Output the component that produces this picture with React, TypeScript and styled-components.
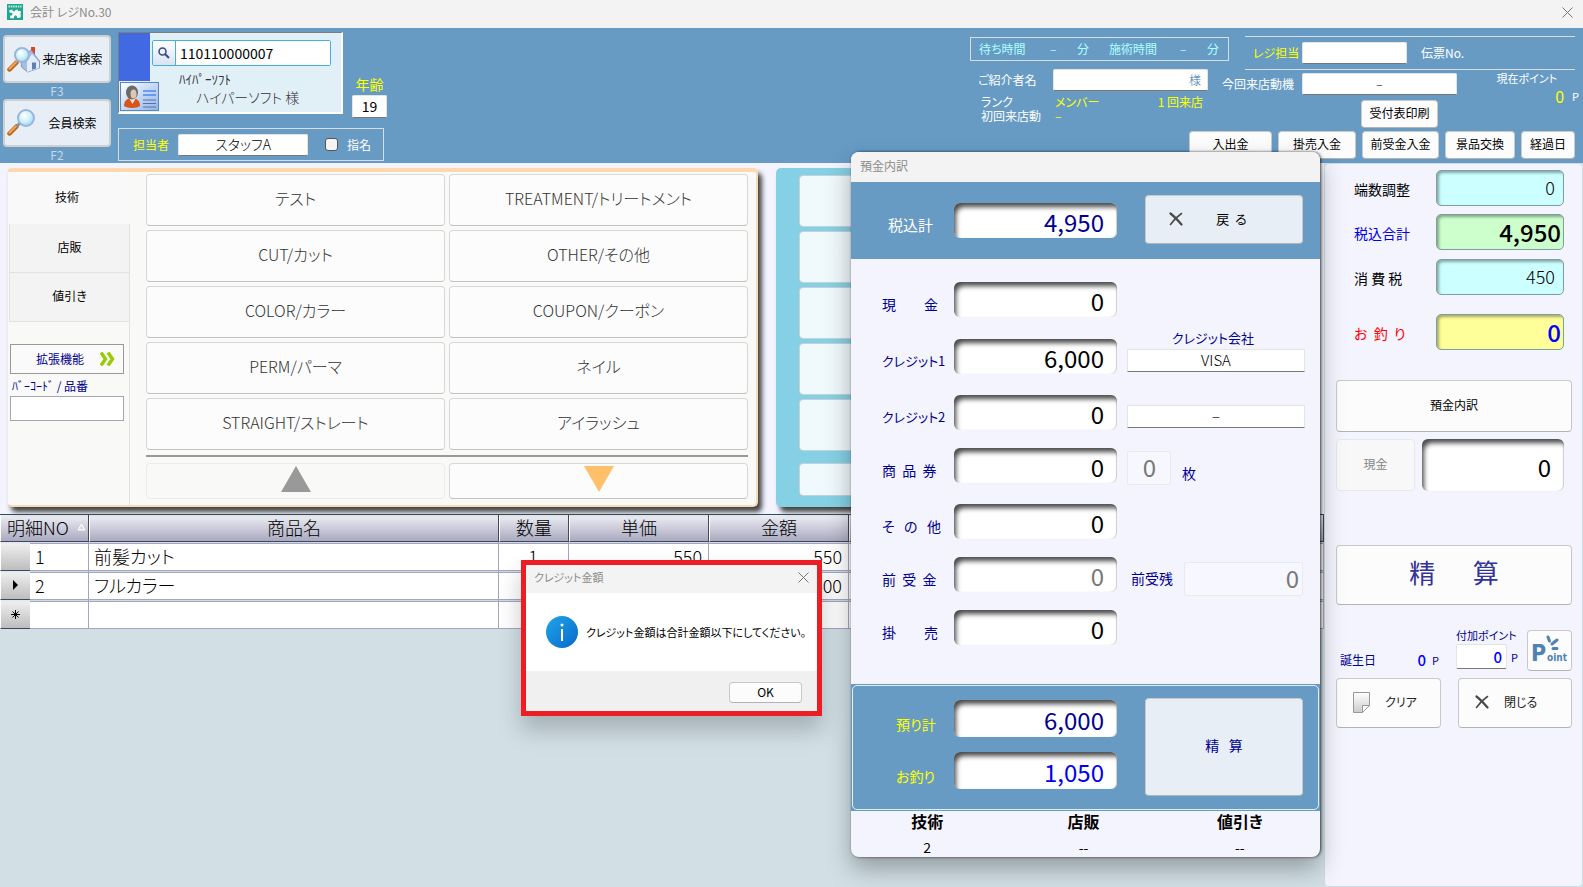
import React from 'react';
import styled, { createGlobalStyle, css } from 'styled-components';

const BLUE = '#679bc4';
const PALE = '#f4f4ff';
const NAVY = '#000090';

const GlobalStyle = createGlobalStyle`
  *, *::before, *::after { box-sizing: border-box; }
  body { margin: 0; }
  body, button, input, select {
    font-family: "Noto Sans CJK JP", "Liberation Sans", sans-serif;
    font-feature-settings: "palt";
    font-weight: 300;
    font-size: 12px;
    line-height: 16px;
    color: #000;
  }
  input, select { min-width: 0; }
`;

/* ---------- shared controls ---------- */

const Page = styled.div`
  position: relative;
  display: flex;
  flex-direction: column;
  min-height: 100vh;
  overflow: hidden;
  background: #d2e0e6;
`;

const Button = styled.button<{ $tone?: 'white' | 'pale' }>`
  display: flex;
  align-items: center;
  justify-content: center;
  padding: 0 0 2px;
  border: 1px solid #c9c9c9;
  border-bottom-color: #b4b4b4;
  border-radius: 4px;
  background: ${(p) => (p.$tone === 'pale' ? '#e8eef6' : '#fcfcfc')};
  white-space: pre;
  font-weight: 400;
  &:disabled { color: #858585; background: #f8f8f9; border-color: #e8e8ea; }
`;

const Box = styled.input<{ $w: number; $align?: string }>`
  width: ${(p) => p.$w}px;
  height: 22px;
  padding: 0 6px 1px;
  border: 1px solid #e4e4e4;
  border-bottom-color: #777;
  border-radius: 2px;
  background: #fff;
  text-align: ${(p) => p.$align || 'left'};
`;

const Amount = styled.input<{ $color?: string; $h?: number }>`
  width: 100%;
  height: ${(p) => p.$h || 35}px;
  padding: 2px 13px 0 8px;
  border: 0;
  border-radius: 6px;
  background: #fff;
  box-shadow: inset 4px 6px 5px -2px #4a4a4a, inset -1px 0 1px #ccc;
  text-align: right;
  font-size: 24px;
  line-height: 28px;
  font-weight: 400;
  color: ${(p) => p.$color || '#000'};
  &:disabled { color: #777; }
`;

/* ---------- title bar ---------- */

const TitleBar = styled.header`
  display: flex;
  align-items: center;
  gap: 7px;
  height: 28px;
  padding: 0 10px 4px 7px;
  background: #f3f3f3;
  color: #8c8c8c;
  font-weight: 400;
`;

const Title = styled.h1`
  flex: 1;
  margin: 0;
  font-size: 12px;
  font-weight: 400;
`;

const PlainButton = styled.button`
  display: flex;
  padding: 0;
  border: 0;
  background: none;
`;

/* ---------- header ---------- */

const Header = styled.section`
  display: flex;
  justify-content: space-between;
  height: 135px;
  background: ${BLUE};
  color: #fff;
  font-weight: 400;
  white-space: nowrap;
`;

const HeaderLeft = styled.div`
  display: flex;
  padding-left: 3px;
`;

const SearchColumn = styled.div`
  display: flex;
  flex-direction: column;
  width: 108px;
  margin-right: 7px;
  padding-top: 7px;
`;

const SearchButton = styled(Button)`
  height: 48px;
  justify-content: space-between;
  padding: 0 4px 1px 2px;
  border-width: 2px;
  border-color: #cfcfcf;
`;

const SearchText = styled.span`
  flex: 1;
  text-align: center;
`;

const KeyHint = styled.span`
  height: 16px;
  text-align: center;
  color: #c6d9ea;
`;

const CustomerColumn = styled.div`
  display: flex;
  flex-direction: column;
  gap: 14px;
  padding-top: 4px;
`;

const CustomerRow = styled.div`
  display: flex;
  align-items: flex-end;
  gap: 9px;
`;

const CustomerCard = styled.div`
  display: flex;
  width: 225px;
  height: 82px;
  border: 1px solid #7d7d7d;
  border-right: 2px solid #fff;
  border-bottom: 2px solid #fff;
  background: #e1eff7;
  color: #333;
`;

const Photo = styled.div`
  width: 31px;
  height: 48px;
  margin-right: 2px;
  background: #4169e1;
`;

const CardIcon = styled.span`
  display: block;
  width: 39px;
  height: 29px;
  margin-top: 49px;
  margin-left: -32px;
  margin-right: -7px;
`;

const CardFields = styled.div`
  display: flex;
  flex-direction: column;
  padding-top: 7px;
`;

const CodeSearch = styled.div`
  display: flex;
  width: 179px;
  height: 26px;
  border: 1px solid #45b0df;
  border-radius: 2px;
  background: #fff;
`;

const CodeButton = styled(PlainButton)`
  width: 23px;
  align-items: center;
  justify-content: center;
  border-right: 1px solid #45b0df;
  background: linear-gradient(#fff, #dbe3f2);
`;

const CodeInput = styled.input`
  flex: 1;
  border: 0;
  padding: 0 4px;
  background: #fff;
  font-size: 14px;
  font-weight: 400;
`;

const Kana = styled.span`
  padding: 5px 0 0 27px;
  font-size: 13px;
  font-feature-settings: normal;
`;

const FullName = styled.span`
  padding-left: 44px;
  font-size: 14px;
  font-weight: 300;
  line-height: 20px;
`;

const Age = styled.label`
  display: flex;
  flex-direction: column;
  align-items: center;
  gap: 3px;
  margin-bottom: -4px;
  color: #ff0;
  font-size: 14px;
`;

const AgeBox = styled(Box)`
  height: 23px;
  font-size: 14px;
  font-weight: 400;
`;

const StaffBox = styled.div`
  display: flex;
  align-items: center;
  width: 266px;
  height: 33px;
  padding-left: 14px;
  border: 1px solid #d5dde5;
`;

const Yellow = styled.span`
  color: #ff0;
`;

const StaffLabel = styled.label`
  width: 45px;
  color: #ff0;
`;

const StaffInput = styled(Box)`
  margin-right: 17px;
  font-size: 14px;
`;

const CheckLabel = styled.label`
  display: flex;
  align-items: center;
  gap: 9px;
`;

const Check = styled.input`
  appearance: none;
  width: 13px;
  height: 13px;
  margin: 0;
  border: 1px solid #555;
  border-radius: 3px;
  background: #f4f4f4;
`;

const HeaderRight = styled.div`
  display: flex;
  flex-direction: column;
  padding: 8px 8px 0 0;
`;

const InfoRow = styled.div`
  display: flex;
  height: 95px;
`;

const VisitInfo = styled.div`
  display: flex;
  flex-direction: column;
  width: 252px;
  padding-top: 1px;
`;

const WaitBox = styled.div`
  display: grid;
  grid-template-columns: 71px 27px 32px 71px 27px 1fr;
  align-items: center;
  width: 259px;
  height: 24px;
  padding-left: 8px;
  border: 1px solid #d5dde5;
  color: #afffff;
`;

const IntroRow = styled.div`
  display: grid;
  grid-template-columns: 75px 155px;
  align-items: center;
  margin-top: 8px;
  padding-left: 8px;
`;

const IntroBox = styled(Box)`
  color: #2d6fb0;
`;

const RankGrid = styled.dl`
  display: grid;
  grid-template-columns: 74px 1fr auto;
  grid-auto-rows: 14px;
  margin: 3px 25px 0 11px;
  line-height: 16px;
  dt, dd { margin: 0; }
  dd { color: #ff0; }
  dd + dd { margin-right: -6px; }
`;

const RegisterInfo = styled.div`
  width: 353px;
`;

const RegisterRow = styled.div`
  display: flex;
  align-items: center;
  height: 34px;
  margin-left: 23px;
  padding-left: 8px;
  border-top: 1px solid #d5dde5;
  border-bottom: 1px solid #d5dde5;
`;

const RegisterLabel = styled.label`
  width: 49px;
  color: #ff0;
`;

const RegisterBox = styled(Box)`
  margin-right: 14px;
`;

const MotiveArea = styled.div`
  display: flex;
  justify-content: space-between;
  padding-top: 3px;
`;

const MotiveRow = styled.div`
  display: grid;
  grid-template-columns: 80px 155px;
  align-items: center;
`;

const PrintButton = styled(Button)`
  width: 77px;
  height: 28px;
  margin: 5px 0 0 139px;
`;

const Points = styled.div`
  display: flex;
  flex-direction: column;
  margin-right: -4px;
`;

const PointValue = styled.span`
  display: flex;
  align-items: center;
  justify-content: flex-end;
  gap: 8px;
  margin-top: 2px;
  font-size: 11px;
  ${Yellow} { font-size: 16px; }
`;

const PointTitle = styled.span`
  margin: -3px 22px 0 0;
  font-size: 11px;
`;

const ActionRow = styled.div`
  display: grid;
  grid-template-columns: 83px 78px 77px 70px 54px;
  column-gap: 6px;
  justify-content: end;
  height: 28px;
`;

/* ---------- workspace ---------- */

const Workspace = styled.main`
  display: flex;
  flex: 1;
  min-height: 0;
`;

const Left = styled.div`
  flex: 1;
  min-width: 0;
`;

const Panels = styled.div`
  display: flex;
  gap: 18px;
  height: 351px;
  padding: 5px 16px 7px 7px;
  background: ${PALE};
`;

const MenuPanel = styled.section`
  display: flex;
  flex: 0 0 751px;
  border: 1px solid #ececec;
  border-top: 4px solid #ffd9ab;
  border-right: 2px solid #f8dcb8;
  border-bottom: 2px solid #f8dcb8;
  border-radius: 5px;
  background: #f9f9f7;
  box-shadow: 4px 5px 5px #444;
`;

const TabColumn = styled.div`
  display: flex;
  flex-direction: column;
  width: 122px;
`;

const Tab = styled.button<{ $active?: boolean }>`
  height: ${(p) => (p.$active ? 52 : 49)}px;
  padding: 0 4px 2px 0;
  border: 0;
  background: #f9f9f9;
  font-weight: 400;
  ${(p) => !p.$active && css`
    margin-left: 1px;
    padding-right: 0;
    border: 1px solid #e2e2e2;
    border-top-width: 0;
    background: #f3f3f3;
  `}
`;

const TabExtras = styled.div`
  flex: 1;
  padding: 22px 5px 0 2px;
  border-right: 1px solid #e2e2e2;
`;

const ExtButton = styled.button`
  display: flex;
  align-items: center;
  justify-content: flex-end;
  gap: 16px;
  width: 114px;
  height: 30px;
  padding: 0 8px;
  border: 1px solid #999;
  background: #fafafa;
  color: ${NAVY};
  font-weight: 400;
`;

const BarcodeLabel = styled.label`
  display: block;
  margin: 4px 0 2px;
  padding-left: 2px;
  color: ${NAVY};
  font-weight: 400;
  font-feature-settings: normal;
`;

const BarcodeInput = styled.input`
  width: 114px;
  height: 25px;
  border: 1px solid #a5a5ad;
  background: #fff;
`;

const MenuList = styled.div`
  flex: 1;
  padding: 2px 8px 4px 16px;
`;

const MenuGrid = styled.div`
  display: grid;
  grid-template-columns: 1fr 1fr;
  grid-auto-rows: 52px;
  gap: 4px;
  padding-bottom: 5px;
  border-bottom: 2px solid #999;
`;

const MenuButton = styled(Button)`
  padding-bottom: 4px;
  border-color: #d8d8d8;
  border-bottom-color: #c2c2c2;
  font-size: 16px;
  font-weight: 300;
  color: #333;
  &:disabled { background: #f9f9f8; border-color: #ececec; }
`;

const PagerGrid = styled.div`
  display: grid;
  grid-template-columns: 1fr 1fr;
  gap: 4px;
  height: 42px;
  padding-top: 6px;
`;

const SubPanel = styled.section`
  display: flex;
  flex: 1;
  flex-direction: column;
  gap: 4px;
  padding: 7px 16px 8px 23px;
  border-radius: 5px;
  background: #85d0e5;
  box-shadow: 4px 5px 5px #444;
`;

const SubCell = styled.button`
  height: 52px;
  border: 1px solid #c3d3d8;
  border-radius: 4px;
  background: linear-gradient(90deg, #f0f9fc, #dfe9ed);
`;

const SubPager = styled(SubCell)`
  height: 33px;
  margin-top: 8px;
`;

/* ---------- detail table ---------- */

const Table = styled.table`
  width: 100%;
  border-collapse: separate;
  border-spacing: 0;
  border-top: 1px solid #2d4f66;
  table-layout: fixed;
  font-size: 18px;
  line-height: 24px;
`;

const HeadCell = styled.th`
  height: 27px;
  padding: 0 6px 2px;
  border-right: 1px solid #44445c;
  border-bottom: 1px solid #44445c;
  border-left: 1px solid #fff;
  background: linear-gradient(#efeff5, #a9a9c0);
  font-weight: 300;
  white-space: nowrap;
`;

const HeadFlex = styled.span`
  display: flex;
  align-items: center;
  justify-content: space-between;
  margin-right: -4px;
`;

const Cell = styled.td<{ $align?: string }>`
  height: 29px;
  padding: 0 6px 1px 5px;
  border-right: 1px solid #a5a5c0;
  border-bottom: 1px solid #a5a5c0;
  background: #fff;
  box-shadow: inset 0 1px #cddde6, inset 0 2px #a5a5c0;
  text-align: ${(p) => p.$align || 'left'};
`;

const RowMark = styled.th`
  height: 29px;
  padding: 0;
  border-bottom: 1px solid #44445c;
  border-left: 1px solid #fff;
  background: linear-gradient(#f2f2f2, #bdbdbd);
  box-shadow: inset 0 2px #e4eaf0;
  font-weight: 400;
  svg { display: block; margin: 0 auto; }
`;

/* ---------- right side ---------- */

const Side = styled.aside`
  width: 259px;
  padding: 6px 10px 0 11px;
  border: 1px solid #cfdbe4;
  border-radius: 4px;
  background: ${PALE};
`;

const SideGrid = styled.div`
  display: grid;
  grid-template-columns: 82px 128px;
  grid-template-rows: 44px 45px 55px 36px;
  margin: 0 0 30px 18px;
  font-size: 14px;
`;

const SideLabel = styled.label<{ $color?: string }>`
  padding-top: 11px;
  white-space: pre;
  font-weight: 400;
  color: ${(p) => p.$color || '#000'};
`;

const SideValue = styled.input<{ $bg: string; $big?: boolean; $color?: string }>`
  width: 128px;
  height: 36px;
  padding: 0 ${(p) => (p.$big ? 2 : 8)}px 2px;
  border: 1px solid #7fa0a0;
  border-radius: 5px;
  background: ${(p) => p.$bg};
  box-shadow: inset 2px 2px 3px rgba(0, 0, 0, 0.35);
  text-align: right;
  font-size: ${(p) => (p.$big ? 24 : 18)}px;
  font-weight: ${(p) => (p.$big ? 500 : 300)};
  line-height: 28px;
  color: ${(p) => p.$color || '#000'};
`;

const WideButton = styled(Button)<{ $h: number }>`
  width: 100%;
  height: ${(p) => p.$h}px;
`;

const CheckoutButton = styled(WideButton)`
  margin-top: 54px;
  font-size: 26px;
  line-height: 32px;
  color: #333399;
  padding-bottom: 6px;
`;

const CashRow = styled.div`
  display: grid;
  grid-template-columns: 79px 1fr;
  gap: 7px;
  margin-top: 7px;
  padding-right: 8px;
`;

const PointRow = styled.div`
  display: flex;
  align-items: flex-end;
  margin: 22px 0 7px;
  padding-left: 4px;
  color: ${NAVY};
  font-weight: 400;
`;

const Birthday = styled.div`
  display: flex;
  align-items: center;
  justify-content: space-between;
  width: 99px;
  margin-bottom: 3px;
`;

const BluePoints = styled.span`
  display: flex;
  align-items: center;
  gap: 6px;
  font-size: 11px;
  strong { color: #0000ff; font-size: 15px; font-weight: 500; }
`;

const ExtraPoints = styled.label`
  display: flex;
  flex-direction: column;
  gap: 1px;
  width: 70px;
  margin: 0 1px 2px 17px;
  font-size: 11px;
`;

const ExtraRow = styled.span`
  display: flex;
  align-items: center;
  gap: 4px;
`;

const ExtraInput = styled(Box)`
  height: 25px;
  padding: 0 4px 1px;
  color: #0000ff;
  font-size: 15px;
  font-weight: 500;
`;

const PointButton = styled(Button)`
  width: 45px;
  height: 41px;
`;

const BottomRow = styled.div`
  display: grid;
  grid-template-columns: 105px 114px;
  justify-content: space-between;
  height: 50px;
`;

const IconButton = styled(Button)`
  justify-content: flex-start;
  gap: 15px;
  padding-left: 16px;
  color: #222;
`;

/* ---------- deposit window ---------- */

const Window = styled.section`
  position: absolute;
  top: 152px;
  right: 263px;
  width: 469px;
  border-radius: 8px;
  background: ${PALE};
  box-shadow: 0 12px 24px rgba(0, 0, 0, 0.3), 1px 0 3px rgba(0, 0, 0, 0.7);
  white-space: pre;
`;

const WindowTitle = styled.h2`
  height: 30px;
  margin: 0;
  padding: 6px 9px;
  border-radius: 8px 8px 0 0;
  background: #f3f3f3;
  color: #8c8c8c;
  font-size: 12px;
  font-weight: 400;
`;

const WindowTop = styled.div`
  display: grid;
  grid-template-columns: 65px 163px 158px;
  column-gap: 28px;
  height: 77px;
  padding: 13px 0 0 10px;
  background: ${BLUE};
`;

const TopLabel = styled.label`
  padding: 22px 0 0 27px;
  color: #fff;
  font-size: 15px;
  font-weight: 400;
`;

const TopAmount = styled.div`
  padding-top: 8px;
`;

const BackButton = styled(Button)`
  height: 49px;
  gap: 33px;
  padding-right: 32px;
  font-size: 13px;
`;

const FormGrid = styled.div`
  display: grid;
  grid-template-columns: 72px 163px 188px;
  grid-template-rows: 57px 56px 53px 56px 53px 53px 74px;
  height: 425px;
  padding: 23px 0 0 31px;
`;

const FormLabel = styled.label<{ $narrow?: boolean }>`
  padding-top: 12px;
  font-size: ${(p) => (p.$narrow ? 13 : 14)}px;
  line-height: 20px;
  font-weight: 400;
  color: ${NAVY};
`;

const FormSide = styled.div<{ $top: number }>`
  display: flex;
  flex-direction: column;
  margin-left: 10px;
  padding-top: ${(p) => p.$top}px;
`;

const SideLine = styled.div<{ $align: string }>`
  display: flex;
  align-items: ${(p) => p.$align};
  gap: 11px;
`;

const SideText = styled(FormLabel)`
  padding: 0 0 2px 4px;
  &:last-child { padding-left: 0; }
`;

const CardLabel = styled.label`
  margin: -10px 0 2px;
  padding-right: 6px;
  text-align: center;
  font-size: 13px;
  line-height: 18px;
  font-weight: 400;
  color: ${NAVY};
`;

const CardSelect = styled.select`
  appearance: none;
  width: 178px;
  height: 23px;
  padding: 0 0 1px;
  border: 1px solid #e4e4e4;
  border-bottom-color: #777;
  border-radius: 1px;
  background: #fff;
  text-align: center;
  text-align-last: center;
  font-size: 15px;
  line-height: 20px;
`;

const FlatAmount = styled.input<{ $w: number }>`
  width: ${(p) => p.$w}px;
  height: 34px;
  padding: 0 ${(p) => (p.$w > 60 ? 3 : 14)}px 3px 0;
  border: 1px solid #eaeaee;
  border-radius: 2px;
  background: #f7f7ff;
  text-align: right;
  font-size: 24px;
  line-height: 28px;
  font-weight: 400;
  color: #777;
`;

const WindowFooter = styled.div`
  height: 127px;
  padding: 1px;
  background: ${BLUE};
`;

const FooterFrame = styled.div`
  display: grid;
  grid-template-columns: 73px 163px 158px;
  grid-template-rows: 52px 52px;
  column-gap: 28px;
  height: 125px;
  padding-top: 14px;
  border: 1px solid #e1eff7;
  border-radius: 5px;
`;

const FooterLabel = styled.label`
  padding: 16px 0 0 43px;
  font-size: 14px;
  font-weight: 400;
  color: #ff0;
`;

const SettleButton = styled(Button)`
  grid-column: 3;
  grid-row: 1 / 3;
  height: 98px;
  margin-top: -2px;
  padding-bottom: 4px;
  font-size: 14px;
  color: ${NAVY};
`;

const Summary = styled.table`
  width: 100%;
  height: 46px;
  table-layout: fixed;
  border-spacing: 0;
  text-align: center;
  th { height: 20px; padding: 0 4px 0 0; font-size: 16px; font-weight: 700; }
  td { height: 26px; padding: 6px 4px 0 0; font-size: 14px; font-weight: 400; }
`;

/* ---------- alert ---------- */

const Alert = styled.div`
  position: absolute;
  top: 560px;
  left: 521px;
  width: 301px;
  border: 5px solid #ee1c25;
  background: #fff;
  box-shadow: 0 14px 22px rgba(0, 0, 0, 0.22);
  font-weight: 400;
`;

const AlertTitle = styled.div`
  display: flex;
  align-items: center;
  justify-content: space-between;
  height: 28px;
  padding: 0 8px 4px;
  background: #f3f3f3;
  color: #8c8c8c;
  font-size: 11px;
`;

const AlertBody = styled.div`
  display: flex;
  align-items: center;
  gap: 8px;
  height: 78px;
  padding-left: 20px;
  white-space: nowrap;
  font-size: 11px;
  svg { flex: none; }
`;

const AlertFooter = styled.div`
  display: flex;
  justify-content: flex-end;
  height: 40px;
  padding: 11px 15px 0;
  background: #f0f0f0;
`;

const OkButton = styled(Button)`
  width: 73px;
  height: 21px;
  padding-bottom: 1px;
`;

/* ---------- icons ---------- */

const CloseIcon = ({ size = 11 }: { size?: number }) => (
  <svg width={size} height={size} viewBox="0 0 11 11" stroke="#777" strokeWidth="1" fill="none">
    <path d="M.5.5l10 10M10.5.5l-10 10" />
  </svg>
);

const CrossIcon = () => (
  <svg width="14" height="14" viewBox="0 0 14 14" fill="none" stroke="#4a4a4a" strokeLinecap="round">
    <path d="M1.5 1.5C5 4 9 8.500 12.500 12.500" strokeWidth="2.200" />
    <path d="M12.500 1.500C8 4.500 4 9 1.500 12.500" strokeWidth="1.600" />
  </svg>
);

const AppIcon = () => (
  <svg width="16" height="16" viewBox="0 0 16 16">
    <rect width="16" height="16" fill="#1fa88f" />
    <path d="M1.500 2.500h13" stroke="#bfe8df" strokeWidth="2" strokeDasharray="1.600 .7" />
    <path d="M2 6.500l3-1 1 1.500a1.500 1.500 0 0 0 2.500-1l2-.5.6 2A1.600 1.600 0 1 1 12 10l2 .5-.5 3-3 .5-.8-1.800a1.300 1.300 0 0 0-2.500.6L6.500 14.500 3 14l.4-2.600A1.500 1.500 0 1 0 3 9z" fill="#fff" />
  </svg>
);

const Magnifier = ({ house }: { house?: boolean }) => (
  <svg width="33" height="30" viewBox="0 0 33 30">
    <defs>
      <radialGradient id="lens" cx=".4" cy=".35" r=".7">
        <stop offset="0" stopColor="#fff" />
        <stop offset=".6" stopColor="#c9eefa" />
        <stop offset="1" stopColor="#8fd2ee" />
      </radialGradient>
    </defs>
    {house && (
      <g>
        <path d="M24 3h4v7h-4z" fill="#d9442a" />
        <path d="M14 15l10-9 8.500 11v7l-12 4-6-5z" fill="#a9bedd" stroke="#7f9ac6" />
        <path d="M20 17l5-7 7 8v6l-12 4z" fill="#e3ecf8" />
        <path d="M25 18.500h4v6l-4 1.300z" fill="#5f7fb5" />
      </g>
    )}
    <path d="M2.500 25.500L9.500 18.500" stroke="#b8651c" strokeWidth="4.500" strokeLinecap="round" />
    <path d="M2.500 24.700L9.300 18" stroke="#f2a457" strokeWidth="2" strokeLinecap="round" />
    {!house && <path d="M9.500 18.500l4-4" stroke="#8a8f99" strokeWidth="3" />}
    <circle cx={house ? 15 : 19} cy={house ? 11 : 10} r={house ? 7 : 8} fill="url(#lens)" stroke="#9ab5dc" strokeWidth="2" />
  </svg>
);

const SmallSearch = () => (
  <svg width="12" height="12" viewBox="0 0 12 12" fill="none" stroke="#34508f">
    <circle cx="4.500" cy="4.500" r="3.500" strokeWidth="1.600" />
    <path d="M7.200 7.200l3.800 3.800" strokeWidth="2.200" />
  </svg>
);

const PersonCard = () => (
  <svg width="39" height="29" viewBox="0 0 39 29">
    <defs>
      <linearGradient id="card" x2="1" y2="1">
        <stop offset="0" stopColor="#fff" />
        <stop offset="1" stopColor="#8db4ea" />
      </linearGradient>
    </defs>
    <rect x=".5" y=".5" width="38" height="28" fill="url(#card)" stroke="#5c84bd" />
    <path d="M4 24c0-5 3-8 8-8s8 3 8 8c-3 2.500-13 2.500-16 0z" fill="#d9541a" />
    <path d="M9 16l3.500 6 3.500-6z" fill="#f8e6d0" />
    <ellipse cx="12" cy="10.500" rx="6" ry="7" fill="#6a6a6a" />
    <ellipse cx="13.500" cy="12" rx="3" ry="4.500" fill="#dcc7b2" />
    <path d="M23 9h13M23 13h13" stroke="#4f8be8" strokeWidth="1.500" />
    <path d="M23 18h13M23 21.500h13M23 25h13" stroke="#5a6fa5" strokeWidth="1.200" />
  </svg>
);

const DoubleChevron = () => (
  <svg width="15" height="14" viewBox="0 0 15 14" fill="none" stroke="#99cc00" strokeWidth="3.400">
    <path d="M1 .5l4.500 6.500L1 13.500M8 .5l4.500 6.500L8 13.500" />
  </svg>
);

const Triangle = ({ down }: { down?: boolean }) => (
  <svg width="30" height="26" viewBox="0 0 30 26">
    {down ? <path d="M0 0h30L15 26z" fill="#ffc069" /> : <path d="M15 0l15 26H0z" fill="#999" />}
  </svg>
);

const InfoIcon = () => (
  <svg width="32" height="32" viewBox="0 0 32 32">
    <defs>
      <linearGradient id="info" x2="1" y2="1">
        <stop offset="0" stopColor="#22a5e8" />
        <stop offset="1" stopColor="#0669cc" />
      </linearGradient>
    </defs>
    <circle cx="16" cy="16" r="16" fill="url(#info)" />
    <path d="M16 13v12" stroke="#fff" strokeWidth="2" />
    <circle cx="16" cy="9" r="1.500" fill="#fff" />
  </svg>
);

const PageIcon = () => (
  <svg width="17" height="21" viewBox="0 0 17 21">
    <defs>
      <linearGradient id="sheet" x2="0" y2="1">
        <stop offset="0" stopColor="#fff" />
        <stop offset="1" stopColor="#ccc" />
      </linearGradient>
    </defs>
    <path d="M.5.5h16v13l-7 7h-9z" fill="url(#sheet)" stroke="#999" />
    <path d="M9.500 20.500v-7h7z" fill="#fff" stroke="#999" />
  </svg>
);

const PointLogo = () => (
  <svg width="38" height="34" viewBox="0 0 38 34" fill="#4f83b3" fontFamily="DejaVu Sans Condensed, DejaVu Sans, sans-serif" fontWeight="700">
    <g stroke="#4f83b3" strokeWidth="3" strokeLinecap="round">
      <path d="M17 4l1.500 4M21 11l5-4M22 15.500h4" />
    </g>
    <text x="0" y="28" fontSize="23">P</text>
    <text x="16" y="28" fontSize="10">oint</text>
  </svg>
);

/* ---------- data ---------- */

const menu = [
  'テスト', 'TREATMENT/トリートメント',
  'CUT/カット', 'OTHER/その他',
  'COLOR/カラー', 'COUPON/クーポン',
  'PERM/パーマ', 'ネイル',
  'STRAIGHT/ストレート', 'アイラッシュ',
];

const totals = [
  { id: 'adjust', label: '端数調整', value: '0', bg: '#ccffff' },
  { id: 'total', label: '税込合計', value: '4,950', bg: '#ccffcc', big: true, labelColor: '#0000e0' },
  { id: 'tax', label: '消 費 税', value: '450', bg: '#ccffff' },
  { id: 'change', label: 'お  釣  り', value: '0', bg: '#ffff99', big: true, labelColor: '#f00', color: '#0000ff' },
];

const App = () => (
  <Page>
    <GlobalStyle />
    <TitleBar>
      <AppIcon />
      <Title>会計 レジNo.30</Title>
      <PlainButton aria-label="閉じる"><CloseIcon /></PlainButton>
    </TitleBar>

    <Header>
      <HeaderLeft>
        <SearchColumn>
          <SearchButton $tone="pale"><Magnifier house /><SearchText>来店客検索</SearchText></SearchButton>
          <KeyHint>F3</KeyHint>
          <SearchButton $tone="pale"><Magnifier /><SearchText>会員検索</SearchText></SearchButton>
          <KeyHint>F2</KeyHint>
        </SearchColumn>
        <CustomerColumn>
          <CustomerRow>
            <CustomerCard>
              <Photo />
              <CardIcon><PersonCard /></CardIcon>
              <CardFields>
                <CodeSearch>
                  <CodeButton aria-label="検索"><SmallSearch /></CodeButton>
                  <CodeInput aria-label="会員番号" defaultValue="110110000007" />
                </CodeSearch>
                <Kana>ﾊｲﾊﾟｰｿﾌﾄ</Kana>
                <FullName>ハイパーソフト  様</FullName>
              </CardFields>
            </CustomerCard>
            <Age>年齢<AgeBox $w={35} $align="center" defaultValue="19" /></Age>
          </CustomerRow>
          <StaffBox>
            <StaffLabel htmlFor="staff">担当者</StaffLabel>
            <StaffInput id="staff" $w={130} $align="center" defaultValue="スタッフA" />
            <CheckLabel><Check type="checkbox" />指名</CheckLabel>
          </StaffBox>
        </CustomerColumn>
      </HeaderLeft>

      <HeaderRight>
        <InfoRow>
          <VisitInfo>
            <WaitBox>
              <span>待ち時間</span><span>–</span><span>分</span>
              <span>施術時間</span><span>–</span><span>分</span>
            </WaitBox>
            <IntroRow>
              <label htmlFor="intro">ご紹介者名</label>
              <IntroBox id="intro" $w={155} $align="right" defaultValue="様" />
            </IntroRow>
            <RankGrid>
              <dt>ランク</dt><dd>メンバー</dd><dd>1 回来店</dd>
              <dt>初回来店動</dt><dd>–</dd>
            </RankGrid>
          </VisitInfo>
          <RegisterInfo>
            <RegisterRow>
              <RegisterLabel htmlFor="register">レジ担当</RegisterLabel>
              <RegisterBox id="register" $w={105} />
              <span>伝票No.</span>
            </RegisterRow>
            <MotiveArea>
              <div>
                <MotiveRow>
                  <label htmlFor="motive">今回来店動機</label>
                  <Box id="motive" $w={155} $align="center" defaultValue="–" />
                </MotiveRow>
                <PrintButton>受付表印刷</PrintButton>
              </div>
              <Points>
                <PointTitle>現在ポイント</PointTitle>
                <PointValue><Yellow>0</Yellow>P</PointValue>
              </Points>
            </MotiveArea>
          </RegisterInfo>
        </InfoRow>
        <ActionRow>
          <Button>入出金</Button>
          <Button>掛売入金</Button>
          <Button>前受金入金</Button>
          <Button>景品交換</Button>
          <Button>経過日</Button>
        </ActionRow>
      </HeaderRight>
    </Header>

    <Workspace>
      <Left>
        <Panels>
          <MenuPanel>
            <TabColumn>
              <Tab $active>技術</Tab>
              <Tab>店販</Tab>
              <Tab>値引き</Tab>
              <TabExtras>
                <ExtButton>拡張機能<DoubleChevron /></ExtButton>
                <BarcodeLabel htmlFor="barcode">ﾊﾞｰｺｰﾄﾞ / 品番</BarcodeLabel>
                <BarcodeInput id="barcode" />
              </TabExtras>
            </TabColumn>
            <MenuList>
              <MenuGrid>
                {menu.map((m) => <MenuButton key={m}>{m}</MenuButton>)}
              </MenuGrid>
              <PagerGrid>
                <MenuButton disabled aria-label="前へ"><Triangle /></MenuButton>
                <MenuButton aria-label="次へ"><Triangle down /></MenuButton>
              </PagerGrid>
            </MenuList>
          </MenuPanel>
          <SubPanel>
            {[1, 2, 3, 4, 5].map((n) => <SubCell key={n} aria-label={`商品 ${n}`} />)}
            <SubPager aria-label="前へ" />
          </SubPanel>
        </Panels>

        <Table>
          <colgroup>
            <col style={{ width: 30 }} /><col style={{ width: 59 }} /><col style={{ width: 410 }} />
            <col style={{ width: 70 }} /><col style={{ width: 140 }} /><col style={{ width: 140 }} /><col />
          </colgroup>
          <thead>
            <tr>
              <HeadCell colSpan={2}>
                <HeadFlex>明細NO
                  <svg width="9" height="8" viewBox="0 0 9 8"><path d="M4.500 1L8 7H1z" fill="#ddd" stroke="#fff" /></svg>
                </HeadFlex>
              </HeadCell>
              <HeadCell>商品名</HeadCell>
              <HeadCell>数量</HeadCell>
              <HeadCell>単価</HeadCell>
              <HeadCell>金額</HeadCell>
              <HeadCell />
            </tr>
          </thead>
          <tbody>
            <tr>
              <RowMark />
              <Cell>1</Cell><Cell>前髪カット</Cell><Cell $align="center">1</Cell>
              <Cell $align="right">550</Cell><Cell $align="right">550</Cell><Cell />
            </tr>
            <tr>
              <RowMark><svg width="5" height="10" viewBox="0 0 5 10"><path d="M0 0l5 5-5 5z" /></svg></RowMark>
              <Cell>2</Cell><Cell>フルカラー</Cell><Cell />
              <Cell /><Cell $align="right">4,400</Cell><Cell />
            </tr>
            <tr>
              <RowMark>
                <svg width="9" height="9" viewBox="0 0 9 9" stroke="#000"><path d="M4.500 0v9M0 4.500h9M1.500 1.500l6 6M7.500 1.500l-6 6" /></svg>
              </RowMark>
              <Cell /><Cell /><Cell /><Cell /><Cell /><Cell />
            </tr>
          </tbody>
        </Table>
      </Left>

      <Side>
        <SideGrid>
          {totals.map((t) => (
            <React.Fragment key={t.id}>
              <SideLabel htmlFor={t.id} $color={t.labelColor}>{t.label}</SideLabel>
              <SideValue id={t.id} readOnly value={t.value} $bg={t.bg} $big={t.big} $color={t.color} />
            </React.Fragment>
          ))}
        </SideGrid>
        <WideButton $h={52}>預金内訳</WideButton>
        <CashRow>
          <Button disabled>現金</Button>
          <Amount $h={52} aria-label="現金" defaultValue="0" />
        </CashRow>
        <CheckoutButton $h={60}>精　  算</CheckoutButton>
        <PointRow>
          <Birthday>誕生日<BluePoints><strong>0</strong>P</BluePoints></Birthday>
          <ExtraPoints>付加ポイント
            <ExtraRow><ExtraInput $w={51} $align="right" defaultValue="0" />P</ExtraRow>
          </ExtraPoints>
          <PointButton aria-label="ポイント"><PointLogo /></PointButton>
        </PointRow>
        <BottomRow>
          <IconButton><PageIcon />クリア</IconButton>
          <IconButton><CrossIcon />閉じる</IconButton>
        </BottomRow>
      </Side>
    </Workspace>

    <Window role="dialog" aria-labelledby="deposit-title">
      <WindowTitle id="deposit-title">預金内訳</WindowTitle>
      <WindowTop>
        <TopLabel htmlFor="w-total">税込計</TopLabel>
        <TopAmount><Amount id="w-total" $color={NAVY} defaultValue="4,950" /></TopAmount>
        <BackButton $tone="pale"><CrossIcon />戻  る</BackButton>
      </WindowTop>
      <FormGrid>
        <FormLabel htmlFor="w-cash">現　　金</FormLabel>
        <Amount id="w-cash" defaultValue="0" />
        <span />

        <FormLabel htmlFor="w-c1" $narrow>クレジット1</FormLabel>
        <Amount id="w-c1" defaultValue="6,000" />
        <FormSide $top={0}>
          <CardLabel htmlFor="w-card">クレジット会社</CardLabel>
          <CardSelect id="w-card"><option>VISA</option></CardSelect>
        </FormSide>

        <FormLabel htmlFor="w-c2" $narrow>クレジット2</FormLabel>
        <Amount id="w-c2" defaultValue="0" />
        <FormSide $top={10}>
          <CardSelect aria-label="クレジット会社2"><option>–</option></CardSelect>
        </FormSide>

        <FormLabel htmlFor="w-gift">商  品  券</FormLabel>
        <Amount id="w-gift" defaultValue="0" />
        <FormSide $top={3}>
          <SideLine $align="flex-end">
            <FlatAmount id="w-count" $w={44} defaultValue="0" />
            <SideText htmlFor="w-count">枚</SideText>
          </SideLine>
        </FormSide>

        <FormLabel htmlFor="w-other">そ   の   他</FormLabel>
        <Amount id="w-other" defaultValue="0" />
        <span />

        <FormLabel htmlFor="w-adv">前  受  金</FormLabel>
        <Amount id="w-adv" disabled defaultValue="0" />
        <FormSide $top={5}>
          <SideLine $align="center">
            <SideText htmlFor="w-rest">前受残</SideText>
            <FlatAmount id="w-rest" $w={119} defaultValue="0" />
          </SideLine>
        </FormSide>

        <FormLabel htmlFor="w-credit">掛　　売</FormLabel>
        <Amount id="w-credit" defaultValue="0" />
      </FormGrid>
      <WindowFooter>
        <FooterFrame>
          <FooterLabel htmlFor="w-deposit">預り計</FooterLabel>
          <Amount id="w-deposit" $h={37} $color={NAVY} defaultValue="6,000" />
          <FooterLabel htmlFor="w-change">お釣り</FooterLabel>
          <Amount id="w-change" $h={37} $color="#0000f0" defaultValue="1,050" />
          <SettleButton $tone="pale">精   算</SettleButton>
        </FooterFrame>
      </WindowFooter>
      <Summary>
        <thead><tr><th>技術</th><th>店販</th><th>値引き</th></tr></thead>
        <tbody><tr><td>2</td><td>--</td><td>--</td></tr></tbody>
      </Summary>
    </Window>

    <Alert role="alertdialog" aria-label="クレジット金額">
      <AlertTitle>クレジット金額<PlainButton aria-label="閉じる"><CloseIcon /></PlainButton></AlertTitle>
      <AlertBody><InfoIcon />クレジット金額は合計金額以下にしてください。</AlertBody>
      <AlertFooter><OkButton>OK</OkButton></AlertFooter>
    </Alert>
  </Page>
);

export default App;
